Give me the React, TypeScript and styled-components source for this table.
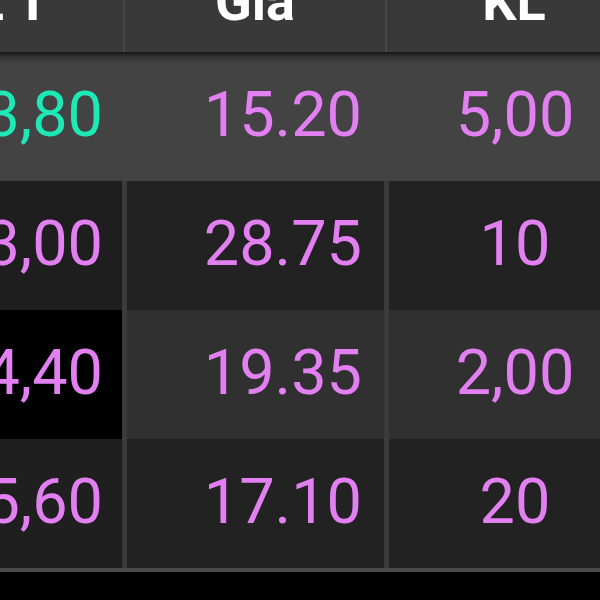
import React from "react";
import styled, { createGlobalStyle } from "styled-components";

const GlobalStyle = createGlobalStyle`
  html, body {
    margin: 0;
    padding: 0;
    background: #000;
    overflow: hidden;
  }
`;

const Viewport = styled.div`
  width: 600px;
  height: 600px;
  overflow: hidden;
  background: #000;
  font-family: Roboto, "Liberation Sans", sans-serif;
`;

const Table = styled.div`
  width: 774px;
  margin: -48px 0 0 -133px;
  border-bottom: 4px solid #4a4a4a;
`;

const HeaderRow = styled.div`
  display: grid;
  grid-template-columns: 258px 262px 1fr;
  height: 100px;
  background: #393939;
`;

const HeaderCell = styled.div`
  border-right: 2px solid #474747;
  color: #fff;
  font-weight: 700;
  font-size: 54px;
  line-height: 100px;
  text-align: center;
  white-space: nowrap;

  &:last-child {
    border-right: none;
  }
`;

const Row = styled.div<{ $active?: boolean }>`
  display: grid;
  grid-template-columns: 255px 257px 252px;
  column-gap: 5px;
  height: 129px;
  background: ${(p) =>
    p.$active ? "linear-gradient(#161616 0, #333 5px, #434343 12px)" : "#3b3b3b"};
`;

const Cell = styled.div<{ $bg?: string; $align: "right" | "center"; $pad?: number; $up?: boolean }>`
  background: ${(p) => p.$bg ?? "transparent"};
  color: ${(p) => (p.$up ? "#1de9b6" : "#e280f2")};
  font-size: 63px;
  line-height: 125px;
  padding-bottom: 4px;
  text-align: ${(p) => p.$align};
  padding-right: ${(p) => p.$pad ?? 0}px;
  white-space: nowrap;
`;

type Quote = {
  vol: string;
  price: string;
  qty: string;
  up?: boolean;
  active?: boolean;
  bg: [string, string, string];
};

const quotes: Quote[] = [
  { vol: "3,80", price: "15.20", qty: "5,00", up: true, active: true, bg: ["transparent", "transparent", "transparent"] },
  { vol: "3,00", price: "28.75", qty: "10", bg: ["#1e1e1e", "#222", "#222"] },
  { vol: "4,40", price: "19.35", qty: "2,00", bg: ["#000", "#303030", "#303030"] },
  { vol: "5,60", price: "17.10", qty: "20", bg: ["#1f1f1f", "#222", "#222"] },
];

export default function App() {
  return (
    <Viewport>
      <GlobalStyle />
      <Table>
        <HeaderRow>
          <HeaderCell>KL T</HeaderCell>
          <HeaderCell>Giá</HeaderCell>
          <HeaderCell>KL</HeaderCell>
        </HeaderRow>
        {quotes.map((q) => (
          <Row key={q.price} $active={q.active}>
            <Cell $bg={q.bg[0]} $align="right" $pad={19} $up={q.up}>
              {q.vol}
            </Cell>
            <Cell $bg={q.bg[1]} $align="right" $pad={22}>
              {q.price}
            </Cell>
            <Cell $bg={q.bg[2]} $align="center">
              {q.qty}
            </Cell>
          </Row>
        ))}
      </Table>
    </Viewport>
  );
}
